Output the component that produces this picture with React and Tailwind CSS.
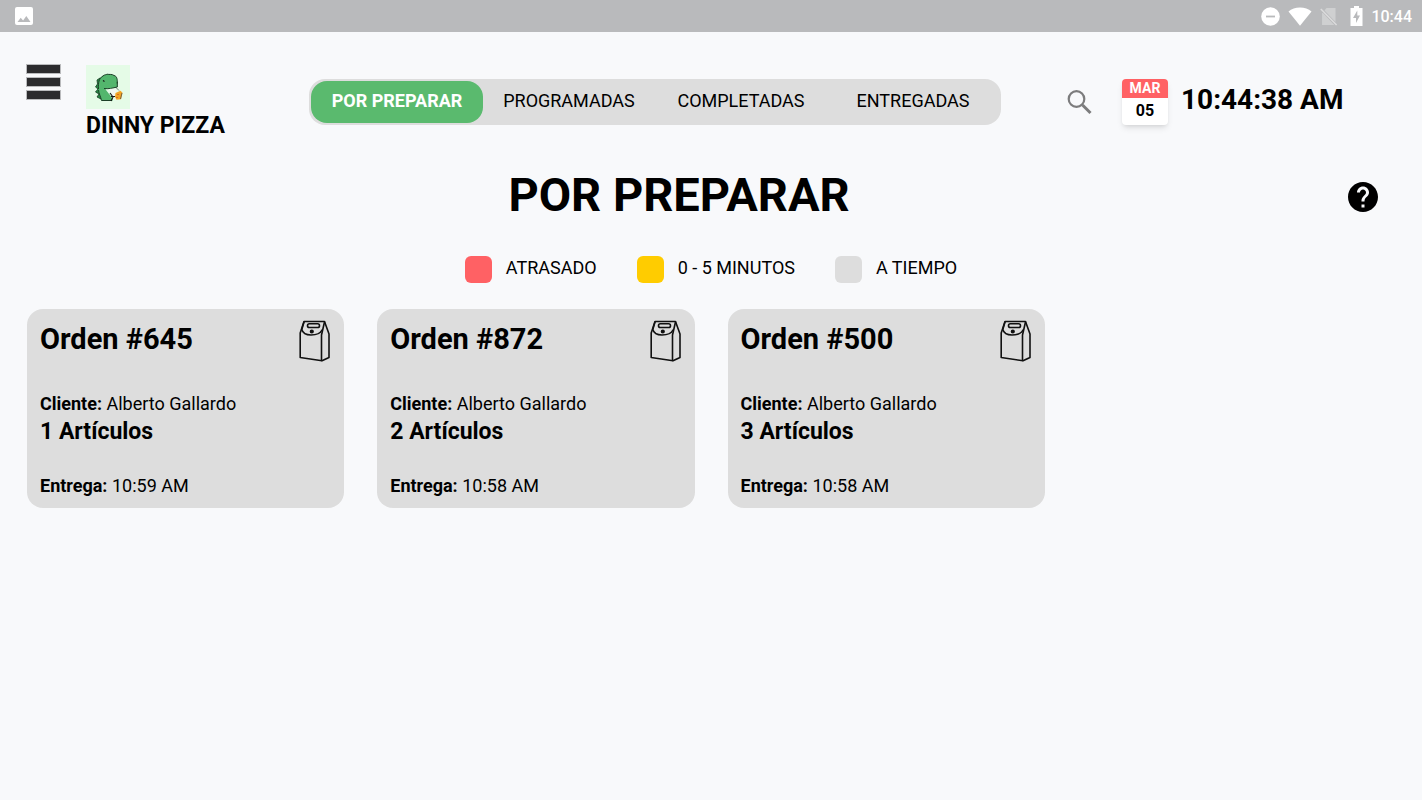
const ORDERS = [
  { id: 645, client: "Alberto Gallardo", items: 1, time: "10:59 AM" },
  { id: 872, client: "Alberto Gallardo", items: 2, time: "10:58 AM" },
  { id: 500, client: "Alberto Gallardo", items: 3, time: "10:58 AM" },
];

const TABS = ["POR PREPARAR", "PROGRAMADAS", "COMPLETADAS", "ENTREGADAS"];

function StatusBar() {
  return (
    <div className="flex h-8 items-center justify-between bg-[#b9babc] pr-[10px] pl-[15px] text-white">
      <svg width="18" height="18" viewBox="0 0 18 18" aria-hidden="true">
        <rect width="18" height="18" rx="2" fill="#fff" />
        <path d="M2.5 15l3.2-4.200 2.400 2.600 3.200-4.400L15.500 15z" fill="#b9babc" />
      </svg>
      <div className="flex items-center">
        <svg width="19" height="19" viewBox="0 0 19 19" aria-hidden="true">
          <circle cx="9.500" cy="9.500" r="9.300" fill="#fff" />
          <path d="M5 9.500h9" stroke="#b9babc" strokeWidth="1.800" />
        </svg>
        <svg className="ml-2" width="24" height="19" viewBox="0 0 24 19" aria-hidden="true">
          <path d="M.5 4.500C3.500 2 7.500.5 12 .5s8.500 1.500 11.500 4L12 18.800z" fill="#fff" />
        </svg>
        <svg className="ml-2" width="18" height="19" viewBox="0 0 18 19" aria-hidden="true">
          <path d="M6.500 1h9v14L4.500 3.500z" fill="#cfd0d1" />
          <path d="M2.200 6v12h12z" fill="#cfd0d1" />
          <path d="M2.200 6v12h11.500L3 6z" fill="#cfd0d1" />
          <path d="M.8 2l15.800 16" stroke="#dcdcdd" strokeWidth="1.500" />
        </svg>
        <svg className="ml-3" width="13" height="20" viewBox="0 0 13 20" aria-hidden="true">
          <path d="M4 0h5v2h3.500v18H.5V2H4z" fill="#fff" />
          <path d="M7.300 4.500L3 12h3v5l4-7.500H7.300z" fill="#b9babc" />
        </svg>
        <span className="ml-2 pt-px text-base leading-8 font-medium">10:44</span>
      </div>
    </div>
  );
}

function DinoLogo() {
  return (
    <svg width="44" height="44" viewBox="0 0 44 44" className="bg-[#e5fbe7]" role="img" aria-label="Dinny Pizza">
      <path d="M14 13l-3 2 .5 4-2 3 2.500 2-2.500 3 3.500 2-2 3 4 2z" fill="#268b45" stroke="#173b22" strokeWidth=".8" />
      <path
        d="M15.500 35.500c-1-4-2.500-6-3-10.500C12 19 12.500 13 16.500 11c4-2 9-2.500 12.500 0 2.500 1.500 3 5 2.300 11-2.500 1-5 1.500-7.800 1.500l-4 .5c2 4 6.500 7 7.500 11.500z"
        fill="#53b66d"
      />
      <path d="M12.500 24c-.5-6 .5-11 4.500-13 1.500-1.500 3-1 4-1.800 2.500.6 5-.4 7 1.300 3 .5 3.500 4 3.200 8" fill="none" stroke="#1c3f27" strokeWidth="1" />
      <path d="M12.500 25c.5 4 2 6 3 10.500H26M18 23.500c4 .8 9-.5 13.300-1.500V17" fill="none" stroke="#1c3f27" strokeWidth="1" />
      <path d="M23 24l7-.5 1 6-3 3z" fill="#f2f7f0" />
      <path d="M17 15.500l1.500 1M24 28l3 4-2 4M25 31.500h4" stroke="#151515" strokeWidth="1.100" fill="none" />
      <path d="M29.500 28l5-2.200 2 2-1.500 6.500-4.500.5-1.500-3z" fill="#f2a324" />
      <path d="M31.500 29l1 1m-2 2l1 1" stroke="#c33c25" strokeWidth="1" />
      <path d="M33 25.500l-3-3M36 28l-1.500 6" stroke="#444" strokeWidth=".7" />
    </svg>
  );
}

function BagIcon() {
  return (
    <svg width="32" height="42" viewBox="0 0 32 42" fill="none" stroke="#111" strokeWidth="1.600" strokeLinejoin="round" strokeLinecap="round" className="shrink-0" aria-hidden="true">
      <path d="M5 1.500h20.500L30 14v23.500L23 40.800 1.200 37.500V13z" />
      <path d="M25.500 2L22.500 15v25.500" />
      <path d="M5 2L2.800 9.500c1 3.800 4.500 5.500 9.200 5.500s9.500-1.800 11-5" />
      <rect x="8.500" y="3.800" width="12" height="3.700" rx="1.850" />
      <circle cx="12.800" cy="11.500" r="1.300" fill="#111" />
    </svg>
  );
}

function Legend({ color, children }) {
  return (
    <li className="flex items-center gap-[14px]">
      <span className={"size-[27px] rounded-md " + color} />
      <span className="pb-1">{children}</span>
    </li>
  );
}

function OrderCard({ order }) {
  return (
    <article className="rounded-2xl bg-[#dddddd] pt-[11px] pr-[13px] pb-2 pl-[13px] text-lg leading-7">
      <div className="flex items-start justify-between">
        <h2 className="text-[29px] leading-[38px] font-bold">Orden #{order.id}</h2>
        <BagIcon />
      </div>
      <p className="mt-7">
        <b>Cliente:</b> {order.client}
      </p>
      <p className="text-[23px] leading-7 font-bold">{order.items} Artículos</p>
      <p className="mt-[26px]">
        <b>Entrega:</b> {order.time}
      </p>
    </article>
  );
}

export default function App() {
  return (
    <div className="min-h-screen bg-[#f8f9fb] font-['Roboto',sans-serif] text-black">
      <StatusBar />
      <header className="grid grid-cols-[282fr_692fr_394fr] items-start px-[27px] pt-[33px]">
        <div className="flex items-start gap-[26px]">
          <button type="button" aria-label="Menú" className="flex w-[33px] flex-col gap-[5px]">
            <span className="h-[8px] w-full bg-[#2c2c2e] outline outline-[#2c2c2e]/30" />
            <span className="h-[8px] w-full bg-[#2c2c2e] outline outline-[#2c2c2e]/30" />
            <span className="h-[8px] w-full bg-[#2c2c2e] outline outline-[#2c2c2e]/30" />
          </button>
          <div>
            <DinoLogo />
            <p className="pt-px text-[23px] leading-8 font-bold whitespace-nowrap">DINNY PIZZA</p>
          </div>
        </div>
        <nav className="mt-[14px] grid grid-cols-4 rounded-2xl bg-[#dddddd] p-[2px] text-lg">
          {TABS.map((tab, i) => (
            <button
              key={tab}
              type="button"
              className={
                i === 0
                  ? "h-[42px] rounded-2xl bg-[#5aba6e] pb-[2px] font-bold text-white"
                  : "h-[42px] rounded-2xl pb-[2px]"
              }
            >
              {tab}
            </button>
          ))}
        </nav>
        <div className="mt-[14px] flex items-center pl-[66px]">
          <button type="button" aria-label="Buscar">
            <svg width="25" height="25" viewBox="0 0 25 25" fill="none" stroke="#7c7c7d" aria-hidden="true">
              <circle cx="9.500" cy="9" r="7.800" strokeWidth="2.200" />
              <path d="M15.500 15l8 8" strokeWidth="3" />
            </svg>
          </button>
          <div className="ml-[30px] w-[46px] overflow-hidden rounded bg-white text-center font-bold shadow-md">
            <div className="bg-[#ff6164] text-sm leading-[19px] text-white">MAR</div>
            <div className="pb-[2px] text-base leading-[25px]">05</div>
          </div>
          <time className="ml-[13px] pb-1 text-[28px] leading-9 font-bold whitespace-nowrap">10:44:38 AM</time>
        </div>
      </header>
      <main>
        <div className="mt-[23px] flex items-center pr-[44px] pl-[10px]">
          <h1 className="flex-1 pb-1 text-center text-[47px] leading-[60px] font-bold">POR PREPARAR</h1>
          <button type="button" aria-label="Ayuda">
            <svg width="30" height="30" viewBox="2 2 20 20" aria-hidden="true">
              <path d="M12 2C6.480 2 2 6.480 2 12s4.480 10 10 10 10-4.480 10-10S17.520 2 12 2zm1 17h-2v-2h2v2zm2.070-7.750l-.9.920C13.450 12.900 13 13.500 13 15h-2v-.5c0-1.100.45-2.100 1.170-2.830l1.240-1.260c.37-.36.59-.86.59-1.410 0-1.100-.9-2-2-2s-2 .9-2 2H8c0-2.210 1.790-4 4-4s4 1.790 4 4c0 .88-.36 1.680-.93 2.250z" />
            </svg>
          </button>
        </div>
        <ul className="mt-[27px] flex justify-center gap-10 text-lg leading-[23px]">
          <Legend color="bg-[#ff6164]">ATRASADO</Legend>
          <Legend color="bg-[#ffcc00]">0 - 5 MINUTOS</Legend>
          <Legend color="bg-[#dddddd]">A TIEMPO</Legend>
        </ul>
        <section aria-label="Órdenes" className="mt-[26px] grid grid-cols-4 gap-[33px] px-[27px]">
          {ORDERS.map((order) => (
            <OrderCard key={order.id} order={order} />
          ))}
        </section>
      </main>
    </div>
  );
}
